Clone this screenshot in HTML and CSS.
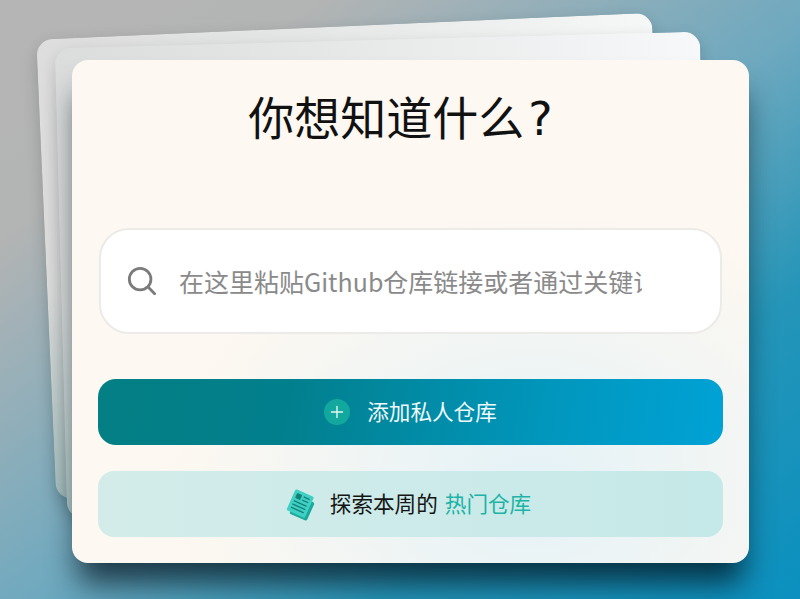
FILE: index.html
```html
<!DOCTYPE html>
<html lang="zh-CN">
<head>
<meta charset="utf-8">
<title>你想知道什么?</title>
<link rel="stylesheet" href="styles.css">
</head>
<body>
<main class="stage">
  <div class="sheet sheet-back"></div>
  <div class="sheet sheet-mid"></div>
  <section class="card">
    <h1 class="title">你想知道什么<span class="mark">?</span></h1>
    <div class="search">
      <svg class="search-icon" viewBox="0 0 32 32" width="30" height="30" aria-hidden="true">
        <circle cx="14" cy="14" r="11.5" fill="none" stroke="#7b7b7b" stroke-width="3"/>
        <path d="M22.5 22.5l7 7" fill="none" stroke="#7b7b7b" stroke-width="3" stroke-linecap="round"/>
      </svg>
      <div class="placeholder">在这里粘贴Github仓库链接或者通过关键词搜索</div>
    </div>
    <button class="primary" type="button">
      <span class="plus">
        <svg viewBox="0 0 26 26" width="26" height="26" aria-hidden="true">
          <path d="M13 7.5v11M7.5 13h11" fill="none" stroke="#e4f7f3" stroke-width="1.4" stroke-linecap="round"/>
        </svg>
      </span>
      <span class="label">添加私人仓库</span>
    </button>
    <button class="explore" type="button">
      <svg class="news" viewBox="0 0 32 34" width="32" height="34" aria-hidden="true">
        <g transform="rotate(24 16 17)">
          <rect x="10" y="10" width="19" height="20" rx="2" fill="#1ba99c"/>
          <rect x="6" y="5" width="20" height="23" rx="1.5" fill="#3ed0c3"/>
          <rect x="9" y="8" width="5.5" height="5.5" rx="1" fill="#167f78"/>
          <path d="M16.5 9h6.5M16.5 12.5h6.5M9 16.5h14M9 20h14M9 23.5h14" fill="none" stroke="#167f78" stroke-width="1.3"/>
        </g>
      </svg>
      <span class="label">探索本周的</span>
      <span class="label explore-link">热门仓库</span>
    </button>
  </section>
</main>
</body>
</html>
```
FILE: styles.css
```css
* { box-sizing: border-box; }
html, body { margin: 0; height: 100%; }
body {
  overflow: hidden;
  font-family: "Noto Sans CJK SC", "Noto Sans", sans-serif;
}
.stage {
  position: relative;
  width: 800px;
  height: 599px;
  padding: 60px 51px 36px 72px;
  overflow: hidden;
  background:
    linear-gradient(to bottom right, #b5b5b5 0%, #b3b4b4 20%, #6fa9bf 52%, #2595b8 74%, #0a90bf 100%);
}
.sheet {
  position: absolute;
  border-radius: 16px;
}
.sheet-back {
  left: 46px;
  top: 26px;
  width: 616px;
  height: 460px;
  transform: rotate(-2.5deg);
  background:
    linear-gradient(180deg, rgba(255, 255, 255, 0) 55%, rgba(130, 175, 175, 0.55) 100%),
    linear-gradient(90deg, #dcdddc 0%, #e4e5e5 40%, #f6f7f7 100%);
  box-shadow: 0 6px 16px rgba(0, 0, 0, 0.18);
}
.sheet-mid {
  left: 61px;
  top: 40px;
  width: 645px;
  height: 470px;
  transform: rotate(-1.5deg);
  background:
    linear-gradient(180deg, rgba(255, 255, 255, 0) 55%, rgba(150, 195, 195, 0.5) 100%),
    linear-gradient(90deg, #dadddc 0%, #e5e7e7 40%, #f7f8f9 100%);
  box-shadow: 0 6px 16px rgba(0, 0, 0, 0.16);
}
.card {
  position: relative;
  display: flex;
  flex-direction: column;
  height: 503px;
  padding: 0 26px;
  border-radius: 16px;
  background:
    radial-gradient(ellipse 360px 270px at 68% 84%, #e4f2f7 0%, rgba(228, 242, 247, 0) 100%),
    #fdf8f1;
  box-shadow: 0 26px 30px -6px rgba(0, 15, 25, 0.72);
}
.title {
  margin: 25px 20px 0 0;
  height: 61px;
  font-size: 46px;
  line-height: 60px;
  font-weight: 400;
  text-align: center;
  color: #111;
  white-space: nowrap;
}
.mark {
  margin-left: 4px;
  font-family: "DejaVu Sans", sans-serif;
  font-size: 46px;
}
.search {
  display: flex;
  align-items: center;
  gap: 22px;
  height: 106px;
  margin: 82px 1px 0;
  padding: 0 78px 0 26px;
  border: 2px solid #ecebe8;
  border-radius: 30px;
  background: #fff;
}
.search-icon { flex: none; }
.placeholder {
  flex: 1;
  overflow: hidden;
  white-space: nowrap;
  font-size: 25px;
  color: #8a8a8a;
}
.primary, .explore {
  display: flex;
  align-items: center;
  justify-content: center;
  width: 100%;
  height: 66px;
  border: 0;
  font: inherit;
  font-size: 21.6px;
}
.label { position: relative; top: -2px; }
.primary {
  gap: 17px;
  margin-top: 45px;
  border-radius: 18px;
  color: #eef9fa;
  background: linear-gradient(100deg, #047f84 0%, #027f8d 30%, #0198c0 75%, #00a2d6 100%);
}
.plus {
  display: flex;
  width: 26px;
  height: 26px;
  border-radius: 50%;
  background: #12a89d;
}
.explore {
  margin-top: 26px;
  border-radius: 16px;
  color: #151515;
  background: linear-gradient(90deg, #d3ecea 0%, #c5e9e8 100%);
}
.news { flex: none; margin: 0 14px 0 -6px; }
.explore-link { margin-left: 7px; color: #1db3a6; }
```
